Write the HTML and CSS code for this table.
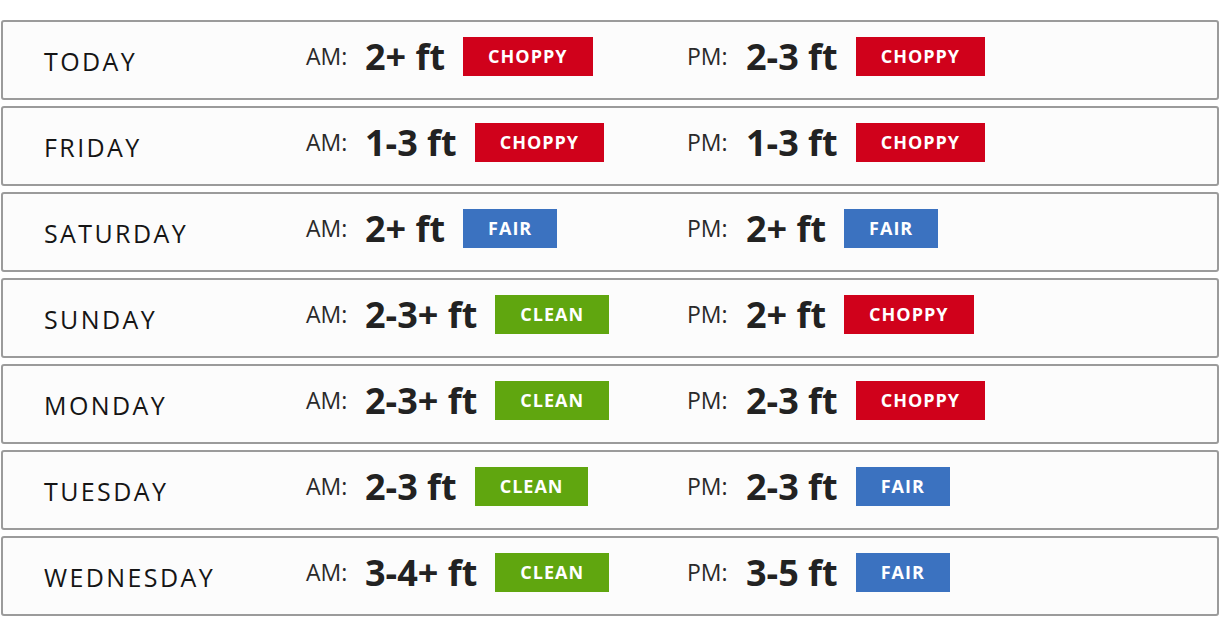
FILE: index.html
```html
<!DOCTYPE html>
<html lang="en">
<head>
<meta charset="utf-8">
<title>Surf Forecast</title>
<link rel="stylesheet" href="styles.css">
</head>
<body>
<div class="forecast">
  <div class="row">
    <div class="day">TODAY</div>
    <div class="slot"><span class="label">AM:</span><span class="height">2+ ft</span><span class="badge choppy">CHOPPY</span></div>
    <div class="slot"><span class="label">PM:</span><span class="height">2-3 ft</span><span class="badge choppy">CHOPPY</span></div>
  </div>
  <div class="row">
    <div class="day">FRIDAY</div>
    <div class="slot"><span class="label">AM:</span><span class="height">1-3 ft</span><span class="badge choppy">CHOPPY</span></div>
    <div class="slot"><span class="label">PM:</span><span class="height">1-3 ft</span><span class="badge choppy">CHOPPY</span></div>
  </div>
  <div class="row">
    <div class="day">SATURDAY</div>
    <div class="slot"><span class="label">AM:</span><span class="height">2+ ft</span><span class="badge fair">FAIR</span></div>
    <div class="slot"><span class="label">PM:</span><span class="height">2+ ft</span><span class="badge fair">FAIR</span></div>
  </div>
  <div class="row">
    <div class="day">SUNDAY</div>
    <div class="slot"><span class="label">AM:</span><span class="height">2-3+ ft</span><span class="badge clean">CLEAN</span></div>
    <div class="slot"><span class="label">PM:</span><span class="height">2+ ft</span><span class="badge choppy">CHOPPY</span></div>
  </div>
  <div class="row">
    <div class="day">MONDAY</div>
    <div class="slot"><span class="label">AM:</span><span class="height">2-3+ ft</span><span class="badge clean">CLEAN</span></div>
    <div class="slot"><span class="label">PM:</span><span class="height">2-3 ft</span><span class="badge choppy">CHOPPY</span></div>
  </div>
  <div class="row">
    <div class="day">TUESDAY</div>
    <div class="slot"><span class="label">AM:</span><span class="height">2-3 ft</span><span class="badge clean">CLEAN</span></div>
    <div class="slot"><span class="label">PM:</span><span class="height">2-3 ft</span><span class="badge fair">FAIR</span></div>
  </div>
  <div class="row">
    <div class="day">WEDNESDAY</div>
    <div class="slot"><span class="label">AM:</span><span class="height">3-4+ ft</span><span class="badge clean">CLEAN</span></div>
    <div class="slot"><span class="label">PM:</span><span class="height">3-5 ft</span><span class="badge fair">FAIR</span></div>
  </div>
</div>
</body>
</html>
```
FILE: styles.css
```css
html, body {
  margin: 0;
  padding: 0;
  background: #ffffff;
}

body {
  font-family: "Open Sans", "DejaVu Sans", sans-serif;
  color: #222222;
}

.forecast {
  display: flex;
  flex-direction: column;
  gap: 6px;
  padding: 20px 1px 0 1px;
}

.row {
  box-sizing: border-box;
  height: 80px;
  border: 2px solid #9b9b9b;
  border-radius: 3px;
  background: #fcfcfc;
  display: grid;
  grid-template-columns: 262px 381px 1fr;
  align-items: center;
  padding-left: 41px;
  padding-bottom: 8px;
}

.day {
  font-size: 25px;
  font-weight: 500;
  letter-spacing: 2.4px;
  color: #151515;
  padding-top: 9px;
}

.slot {
  display: flex;
  align-items: center;
}

.label {
  font-size: 23px;
  color: #2a2a2a;
  width: 59px;
}

.height {
  font-size: 36px;
  font-weight: 700;
  color: #222222;
  margin-right: 18px;
}

.badge {
  display: inline-block;
  height: 39px;
  line-height: 39px;
  padding: 0 25px;
  font-size: 18px;
  font-weight: 700;
  letter-spacing: 1px;
  color: #ffffff;
}

.choppy { background: #d0011b; }
.fair { background: #3b72c0; }
.clean { background: #60a60f; }
```
